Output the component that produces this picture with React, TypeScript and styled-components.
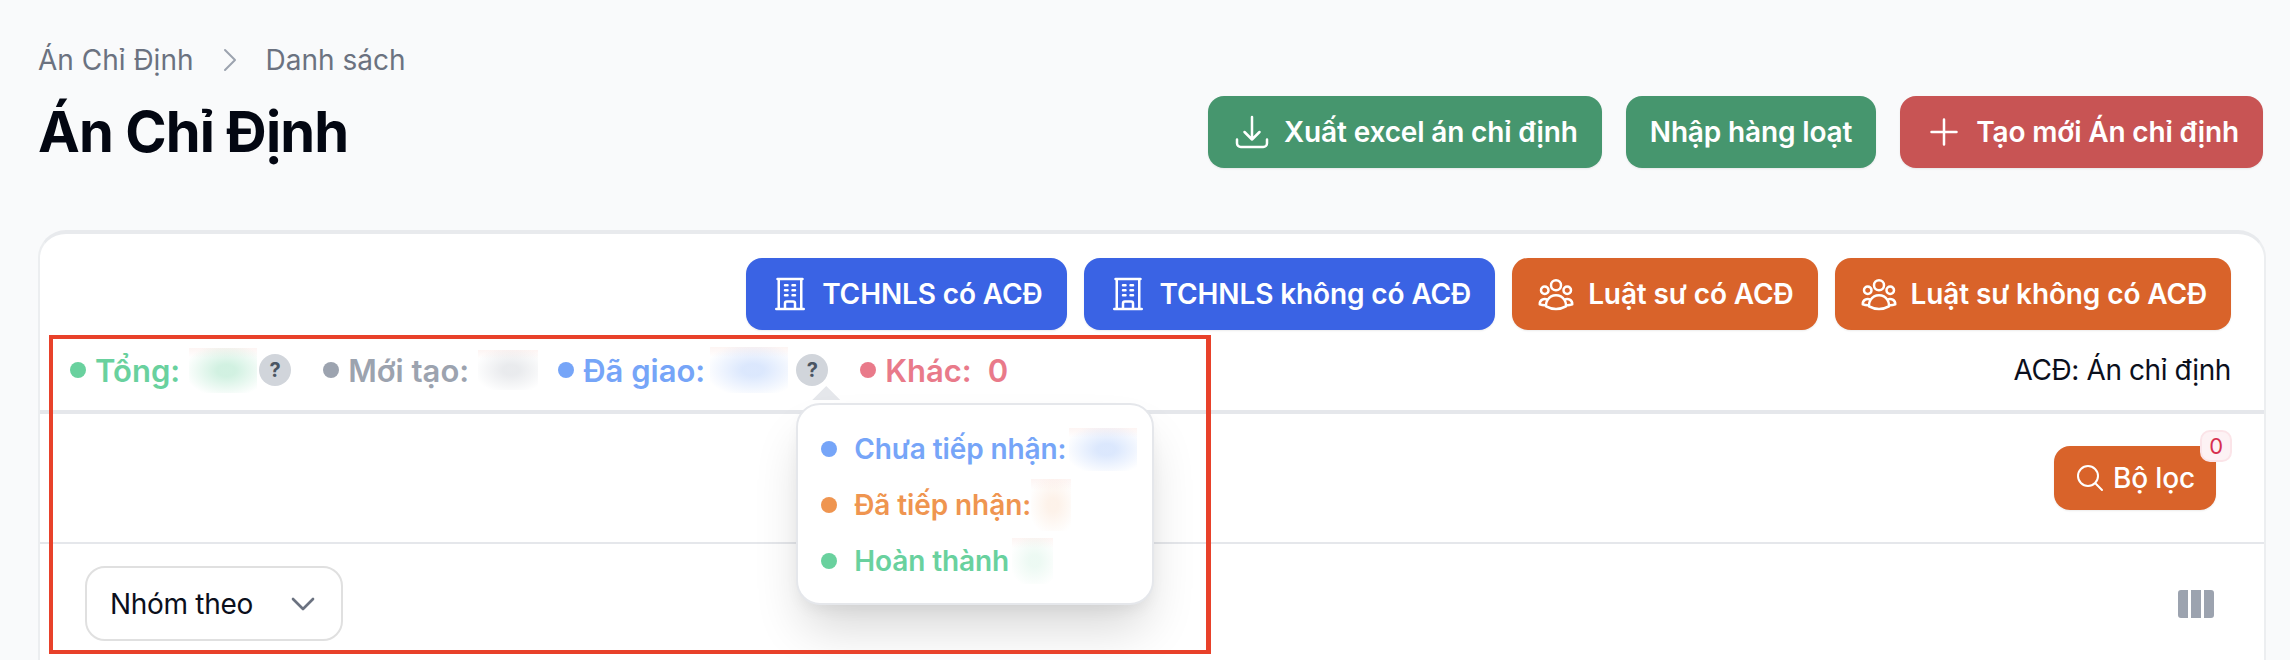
import React from "react";
import styled, { createGlobalStyle } from "styled-components";
import {
  HiOutlineArrowDownTray,
  HiOutlinePlus,
  HiOutlineBuildingOffice,
  HiOutlineUserGroup,
  HiOutlineMagnifyingGlass,
  HiOutlineChevronRight,
  HiOutlineChevronDown,
} from "react-icons/hi2";

const Global = createGlobalStyle`
  html, body { margin: 0; padding: 0; height: 100%; overflow: hidden; background: #f9fafb; }
  #root { height: 100%; }
  * { box-sizing: border-box; }
`;

const Page = styled.div`
  position: relative;
  height: 660px;
  overflow: hidden;
  padding: 0 24px 0 38px;
  font-family: Inter, "Noto Sans", sans-serif;
  color: #0b0f1c;
  background: #f9fafb;
`;

const Header = styled.header`
  display: flex;
  justify-content: space-between;
  align-items: flex-start;
  height: 230px;
`;

const TitleBlock = styled.div`
  padding-top: 42px;
`;

const Breadcrumb = styled.nav`
  display: flex;
  align-items: center;
  height: 36px;
  gap: 20px;
  font-size: 28px;
  line-height: 36px;
  color: #6b7280;
`;

const Crumb = styled.span``;

const CrumbIcon = styled(HiOutlineChevronRight)`
  width: 32px;
  height: 32px;
  color: #9ca3af;
`;

const Title = styled.h1`
  margin: 26px 0 0;
  font-size: 56px;
  line-height: 56px;
  font-weight: 700;
  letter-spacing: -0.9px;
  color: #030712;
`;

const Actions = styled.div`
  display: flex;
  gap: 24px;
  padding-top: 96px;
  padding-right: 3px;
`;

const Button = styled.button<{ $bg: string }>`
  display: inline-flex;
  align-items: center;
  gap: 12px;
  height: 72px;
  padding: 0 24px;
  border: 0;
  border-radius: 16px;
  background: ${(p) => p.$bg};
  color: #fff;
  font-family: inherit;
  font-size: 28px;
  font-weight: 600;
  letter-spacing: -0.15px;
  white-space: nowrap;
  box-shadow: 0 1px 2px rgba(0, 0, 0, 0.08);
  svg { width: 40px; height: 40px; flex: none; }
`;

const Card = styled.section`
  border: 2px solid #eceef0;
  border-top: 4px solid #e8eaed;
  border-radius: 28px;
  background: #fff;
  height: 600px;
`;

const CardButtons = styled.div`
  display: flex;
  justify-content: flex-end;
  gap: 17px;
  padding: 24px 33px 0 0;
  ${Button} { letter-spacing: -0.12px; }
`;

const StatsRow = styled.div`
  display: flex;
  align-items: center;
  justify-content: space-between;
  height: 84px;
  padding: 0 33px 0 30px;
  border-bottom: 4px solid #e5e7eb;
`;

const Stats = styled.div`
  display: flex;
  align-items: center;
`;

const Stat = styled.div<{ $color: string; $after: number }>`
  display: flex;
  align-items: center;
  margin-right: ${(p) => p.$after}px;
  color: ${(p) => p.$color};
  font-size: 31px;
  font-weight: 600;
  white-space: nowrap;
`;

const Dot = styled.span<{ $color: string }>`
  flex: none;
  width: 16px;
  height: 16px;
  border-radius: 50%;
  background: ${(p) => p.$color};
`;

const StatLabel = styled.span`
  margin-left: 9px;
`;

const StatValue = styled.span`
  margin-left: 16px;
`;

const Blurred = styled.span<{ $w: number; $h: number; $tint: string; $ml: number }>`
  flex: none;
  display: block;
  width: ${(p) => p.$w}px;
  height: ${(p) => p.$h}px;
  margin-left: ${(p) => p.$ml}px;
  background:
    radial-gradient(ellipse 62% 60% at 55% 50%, ${(p) => p.$tint} 0%, ${(p) => p.$tint} 22%, transparent 100%),
    linear-gradient(180deg, rgba(250, 225, 220, 0.35), rgba(255, 255, 255, 0) 22%);
`;

const HelpWrap = styled.span<{ $ml: number }>`
  position: relative;
  flex: none;
  display: block;
  margin-left: ${(p) => p.$ml}px;
`;

const Help = styled.span`
  display: flex;
  align-items: center;
  justify-content: center;
  width: 32px;
  height: 32px;
  border-radius: 50%;
  background: #d1d5db;
  color: #4b5563;
  font-size: 20px;
  font-weight: 700;
`;

const Arrow = styled.span`
  position: absolute;
  top: 32px;
  left: 16px;
  width: 28px;
  height: 14px;
  background: #e5e7eb;
  clip-path: polygon(50% 0, 100% 100%, 0 100%);
`;

const Popover = styled.div`
  position: absolute;
  z-index: 2;
  top: 49px;
  left: 0;
  width: 358px;
  height: 202px;
  display: flex;
  flex-direction: column;
  justify-content: center;
  gap: 16px;
  padding: 2px 0 0 23px;
  background: #fff;
  border: 2px solid #e5e7eb;
  border-radius: 24px;
  box-shadow: 0 30px 50px -8px rgba(0, 0, 0, 0.16), 0 8px 16px -4px rgba(0, 0, 0, 0.06);
`;

const PopRow = styled.div<{ $color: string }>`
  display: flex;
  align-items: center;
  height: 40px;
  color: ${(p) => p.$color};
  font-size: 28px;
  font-weight: 600;
`;

const PopLabel = styled.span`
  margin-left: 17px;
  letter-spacing: -0.1px;
`;

const Note = styled.span`
  font-size: 28px;
  letter-spacing: -0.4px;
  color: #0b0f1c;
  white-space: nowrap;
`;

const FilterRow = styled.div`
  display: flex;
  justify-content: flex-end;
  align-items: center;
  height: 130px;
  padding-right: 48px;
  border-bottom: 2px solid #e5e7eb;
`;

const FilterButton = styled(Button)`
  position: relative;
  height: 64px;
  gap: 7px;
  padding: 0 21px 0 20px;
  font-weight: 500;
  svg { width: 32px; height: 32px; }
`;

const Badge = styled.span`
  position: absolute;
  top: -16px;
  right: -16px;
  width: 32px;
  height: 32px;
  display: flex;
  align-items: center;
  justify-content: center;
  border: 2px solid #fbe4e8;
  border-radius: 10px;
  background: #fdf2f4;
  color: #d6304f;
  font-size: 22px;
  font-weight: 400;
`;

const TableBar = styled.div`
  display: flex;
  justify-content: space-between;
  align-items: center;
  padding: 22px 50px 0 45px;
`;

const GroupSelect = styled.div`
  display: flex;
  align-items: center;
  justify-content: space-between;
  width: 258px;
  height: 75px;
  padding: 0 22px 0 23px;
  border: 2px solid #e0e0e0;
  border-radius: 20px;
  font-size: 28px;
  letter-spacing: -0.3px;
  svg { width: 32px; height: 32px; color: #6b7280; stroke-width: 2; }
`;

const ColumnsIcon = styled.svg`
  display: block;
  width: 36px;
  height: 28px;
  color: #9ca3af;
`;

const Annotation = styled.div`
  position: absolute;
  left: 49px;
  top: 335px;
  width: 1162px;
  height: 319px;
  border: 4px solid #e8412a;
  border-right-width: 5px;
  pointer-events: none;
  z-index: 3;
`;

const GREEN = "#69d19e";
const GRAY = "#9ca3af";
const BLUE = "#76a5f8";
const RED = "#e97a8a";
const ORANGE = "#ef9550";
const BTN_GREEN = "#46966e";
const BTN_RED = "#c85454";
const BTN_BLUE = "#3a63e4";
const BTN_ORANGE = "#d9632a";

export default function App() {
  return (
    <Page>
      <Global />
      <Header>
        <TitleBlock>
          <Breadcrumb>
            <Crumb>Án Chỉ Định</Crumb>
            <CrumbIcon />
            <Crumb>Danh sách</Crumb>
          </Breadcrumb>
          <Title>Án Chỉ Định</Title>
        </TitleBlock>
        <Actions>
          <Button $bg={BTN_GREEN}><HiOutlineArrowDownTray />Xuất excel án chỉ định</Button>
          <Button $bg={BTN_GREEN}>Nhập hàng loạt</Button>
          <Button $bg={BTN_RED}><HiOutlinePlus />Tạo mới Án chỉ định</Button>
        </Actions>
      </Header>
      <Card>
        <CardButtons>
          <Button $bg={BTN_BLUE}><HiOutlineBuildingOffice />TCHNLS có ACĐ</Button>
          <Button $bg={BTN_BLUE}><HiOutlineBuildingOffice />TCHNLS không có ACĐ</Button>
          <Button $bg={BTN_ORANGE}><HiOutlineUserGroup />Luật sư có ACĐ</Button>
          <Button $bg={BTN_ORANGE}><HiOutlineUserGroup />Luật sư không có ACĐ</Button>
        </CardButtons>
        <StatsRow>
          <Stats>
            <Stat $color={GREEN} $after={32}>
              <Dot $color={GREEN} />
              <StatLabel>Tổng:</StatLabel>
              <Blurred $w={68} $h={45} $ml={9} $tint="rgba(105,209,158,0.3)" />
              <HelpWrap $ml={2}><Help>?</Help></HelpWrap>
            </Stat>
            <Stat $color={GRAY} $after={20}>
              <Dot $color={GRAY} />
              <StatLabel>Mới tạo:</StatLabel>
              <Blurred $w={60} $h={40} $ml={9} $tint="rgba(156,163,175,0.22)" />
            </Stat>
            <Stat $color={BLUE} $after={32}>
              <Dot $color={BLUE} />
              <StatLabel>Đã giao:</StatLabel>
              <Blurred $w={78} $h={46} $ml={5} $tint="rgba(118,165,248,0.26)" />
              <HelpWrap $ml={8}>
                <Help>?</Help>
                <Arrow />
                <Popover>
                  <PopRow $color={BLUE}>
                    <Dot $color={BLUE} />
                    <PopLabel>Chưa tiếp nhận:</PopLabel>
                    <Blurred $w={68} $h={43} $ml={3} $tint="rgba(118,165,248,0.26)" />
                  </PopRow>
                  <PopRow $color={ORANGE}>
                    <Dot $color={ORANGE} />
                    <PopLabel>Đã tiếp nhận:</PopLabel>
                    <Blurred $w={40} $h={52} $ml={0} $tint="rgba(239,149,80,0.12)" />
                  </PopRow>
                  <PopRow $color={GREEN}>
                    <Dot $color={GREEN} />
                    <PopLabel>Hoàn thành</PopLabel>
                    <Blurred $w={41} $h={46} $ml={3} $tint="rgba(105,209,158,0.12)" />
                  </PopRow>
                </Popover>
              </HelpWrap>
            </Stat>
            <Stat $color={RED} $after={0}>
              <Dot $color={RED} />
              <StatLabel>Khác:</StatLabel>
              <StatValue>0</StatValue>
            </Stat>
          </Stats>
          <Note>ACĐ: Án chỉ định</Note>
        </StatsRow>
        <FilterRow>
          <FilterButton $bg={BTN_ORANGE}>
            <HiOutlineMagnifyingGlass />
            Bộ lọc
            <Badge>0</Badge>
          </FilterButton>
        </FilterRow>
        <TableBar>
          <GroupSelect>
            Nhóm theo
            <HiOutlineChevronDown />
          </GroupSelect>
          <ColumnsIcon viewBox="0 0 36 28" aria-hidden="true">
            <path fill="currentColor" d="M10 0v28H3a3 3 0 0 1-3-3V3a3 3 0 0 1 3-3h7ZM13 0h10v28H13zM26 0h7a3 3 0 0 1 3 3v22a3 3 0 0 1-3 3h-7V0Z" />
          </ColumnsIcon>
        </TableBar>
      </Card>
      <Annotation />
    </Page>
  );
}
